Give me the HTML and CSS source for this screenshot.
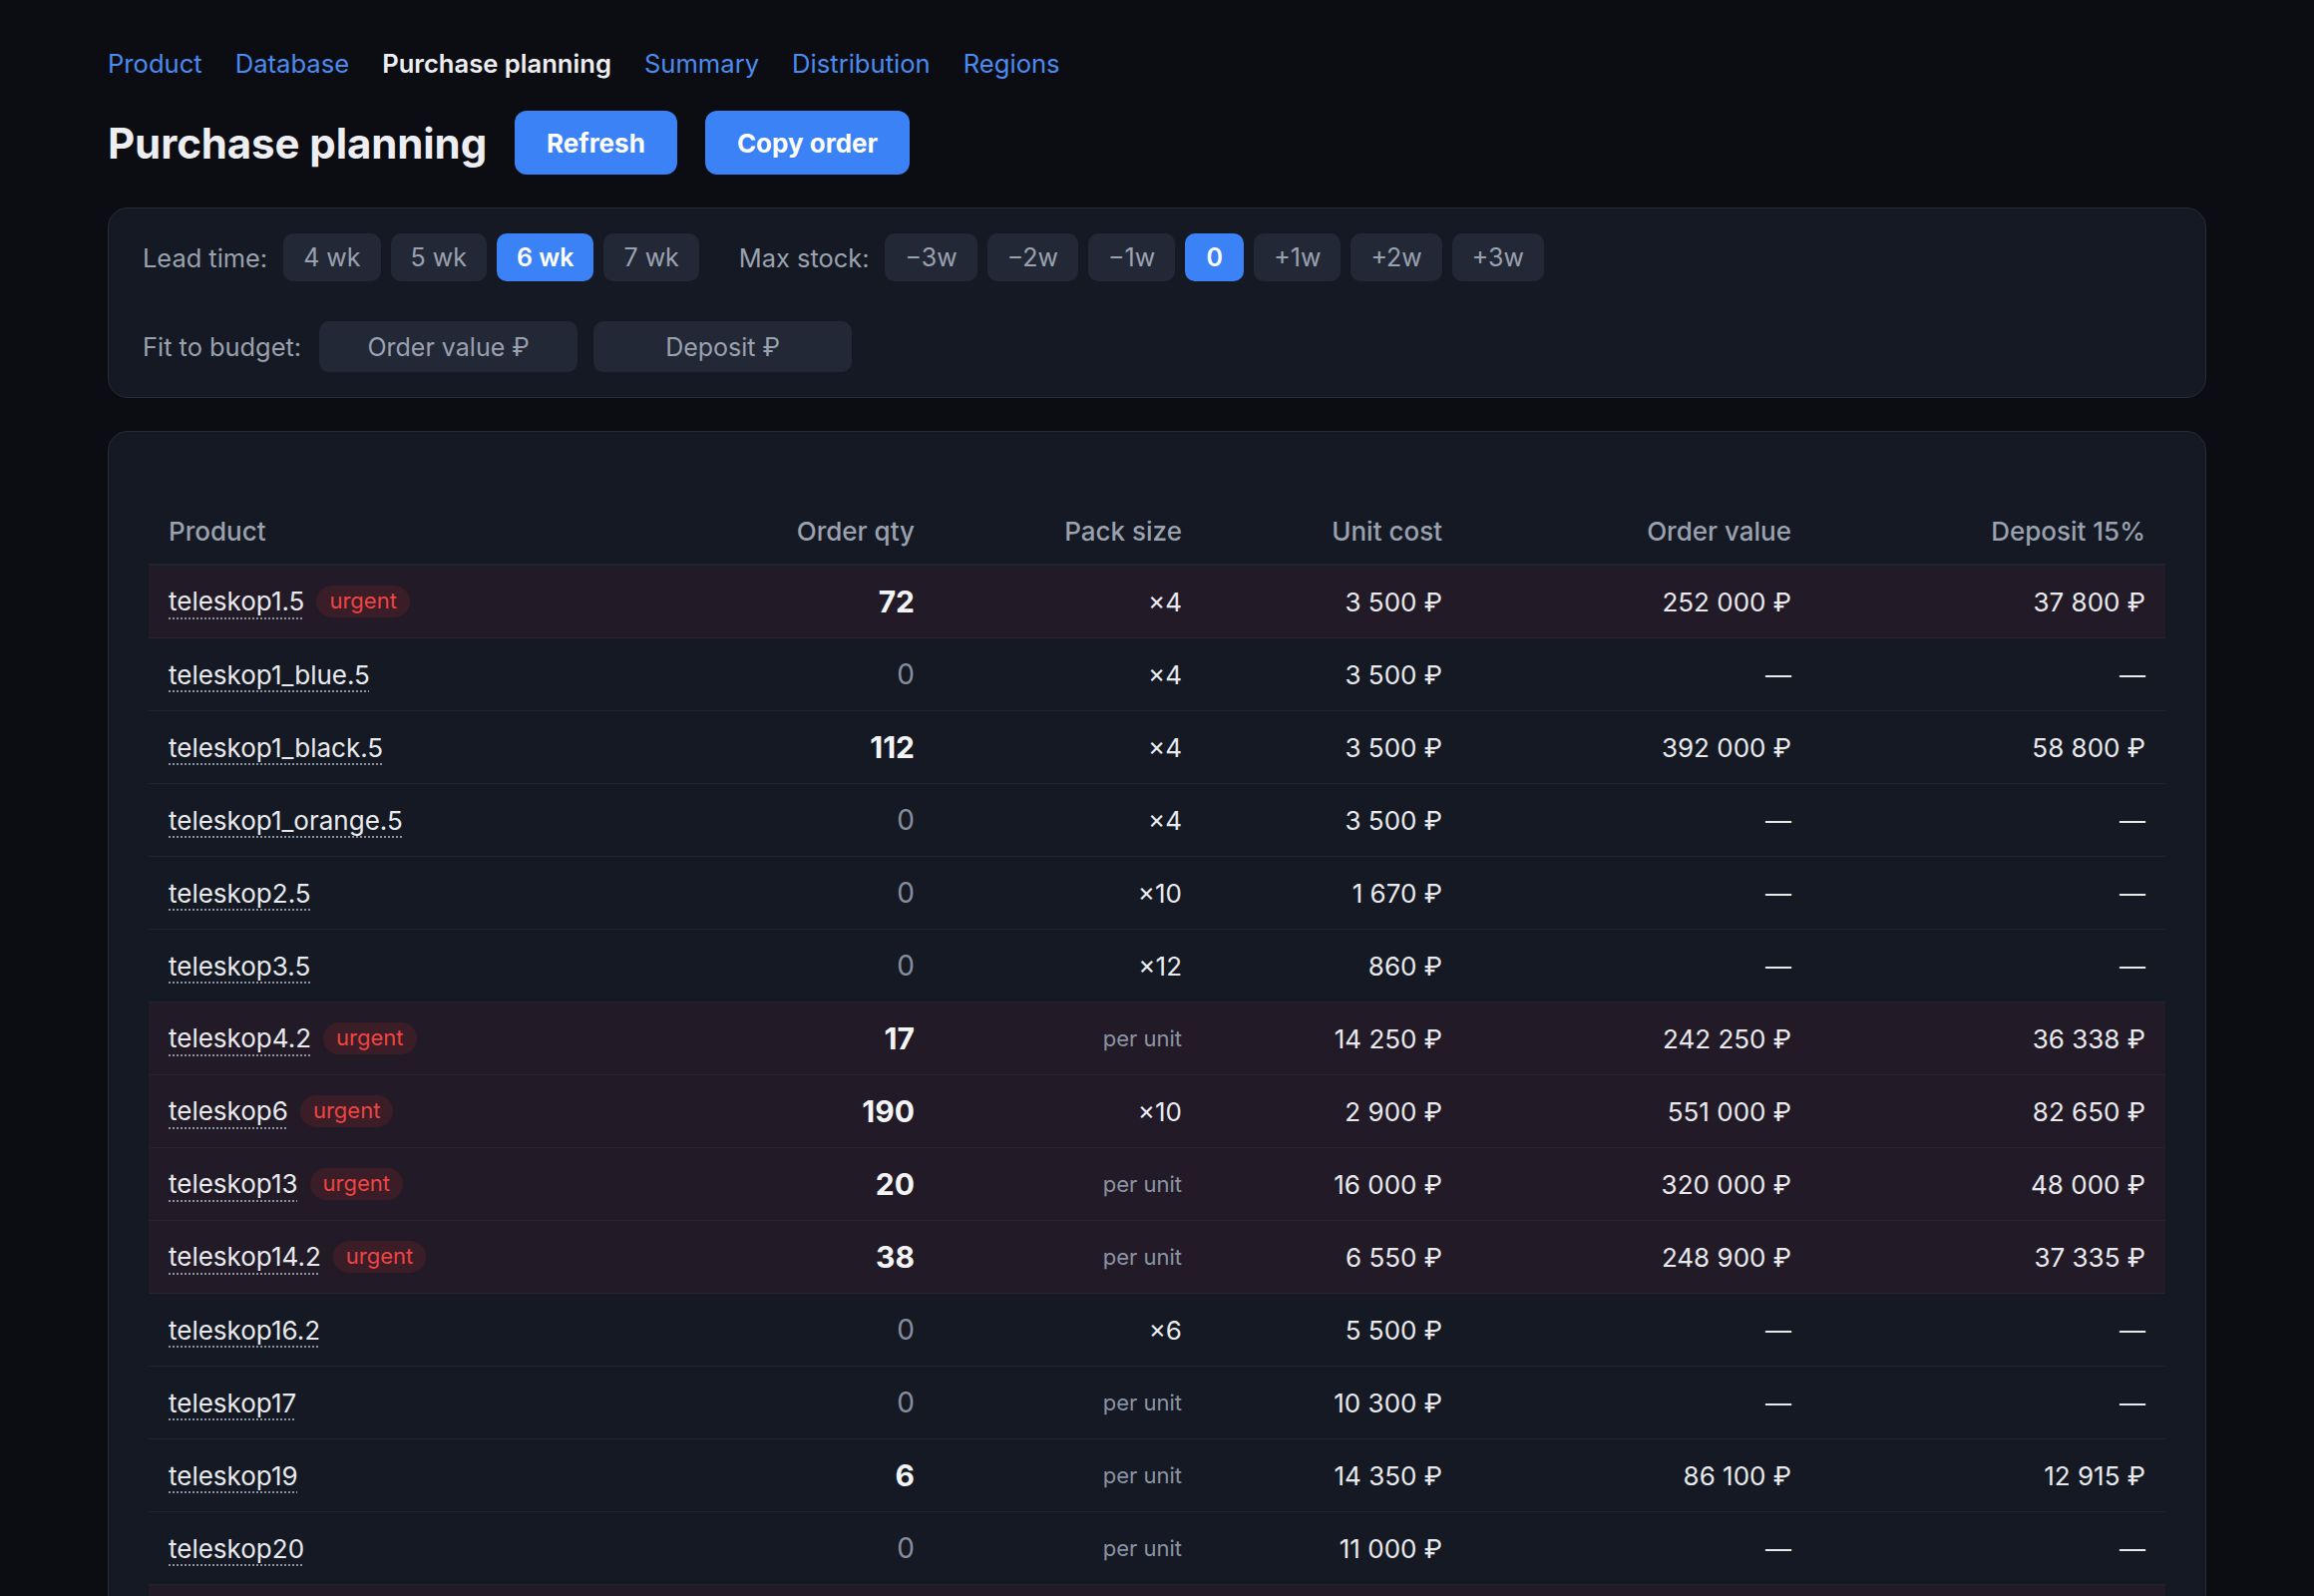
FILE: index.html
```html
<!DOCTYPE html>
<html lang="en">
<head>
  <meta charset="UTF-8" />
  <meta name="viewport" content="width=device-width, initial-scale=1.0"/>
  <title>Purchase planning</title>
  <link rel="stylesheet" href="styles.css">
</head>
<body>

  <nav class="tabs">
    <a href="#">Product</a>
    <a href="#">Database</a>
    <a href="#" class="active">Purchase planning</a>
    <a href="#">Summary</a>
    <a href="#">Distribution</a>
    <a href="#">Regions</a>
  </nav>

  <div class="page-head">
    <h1>Purchase planning</h1>
    <button class="btn">Refresh</button>
    <button class="btn">Copy order</button>
  </div>

  <div class="filters">
    <div class="filter-row">
      <div class="group">
        <span class="label">Lead time:</span>
        <button class="chip">4 wk</button>
        <button class="chip">5 wk</button>
        <button class="chip on">6 wk</button>
        <button class="chip">7 wk</button>
      </div>
      <div class="group">
        <span class="label">Max stock:</span>
        <button class="chip">&minus;3w</button>
        <button class="chip">&minus;2w</button>
        <button class="chip">&minus;1w</button>
        <button class="chip on">0</button>
        <button class="chip">+1w</button>
        <button class="chip">+2w</button>
        <button class="chip">+3w</button>
      </div>
    </div>
    <div class="filter-row budget">
      <span class="label">Fit to budget:</span>
      <button class="chip wide">Order value ₽</button>
      <button class="chip wide">Deposit ₽</button>
    </div>
  </div>

  <div class="card">
    <table class="plan">
      <colgroup>
        <col style="width: 551px">
        <col style="width: 237px">
        <col style="width: 268px">
        <col style="width: 261px">
        <col style="width: 350px">
        <col style="width: 355px">
      </colgroup>
      <thead>
        <tr>
          <th class="left">Product</th>
          <th>Order qty</th>
          <th>Pack size</th>
          <th>Unit cost</th>
          <th>Order value</th>
          <th>Deposit 15%</th>
        </tr>
      </thead>
      <tbody>
        <tr class="urgent">
          <td class="left"><span class="sku">teleskop1.5</span><span class="badge">urgent</span></td>
          <td class="qty">72</td><td>×4</td><td>3&nbsp;500 ₽</td><td>252&nbsp;000 ₽</td><td>37&nbsp;800 ₽</td>
        </tr>
        <tr>
          <td class="left"><span class="sku">teleskop1_blue.5</span></td>
          <td class="qty zero">0</td><td>×4</td><td>3&nbsp;500 ₽</td><td>—</td><td>—</td>
        </tr>
        <tr>
          <td class="left"><span class="sku">teleskop1_black.5</span></td>
          <td class="qty">112</td><td>×4</td><td>3&nbsp;500 ₽</td><td>392&nbsp;000 ₽</td><td>58&nbsp;800 ₽</td>
        </tr>
        <tr>
          <td class="left"><span class="sku">teleskop1_orange.5</span></td>
          <td class="qty zero">0</td><td>×4</td><td>3&nbsp;500 ₽</td><td>—</td><td>—</td>
        </tr>
        <tr>
          <td class="left"><span class="sku">teleskop2.5</span></td>
          <td class="qty zero">0</td><td>×10</td><td>1&nbsp;670 ₽</td><td>—</td><td>—</td>
        </tr>
        <tr>
          <td class="left"><span class="sku">teleskop3.5</span></td>
          <td class="qty zero">0</td><td>×12</td><td>860 ₽</td><td>—</td><td>—</td>
        </tr>
        <tr class="urgent">
          <td class="left"><span class="sku">teleskop4.2</span><span class="badge">urgent</span></td>
          <td class="qty">17</td><td class="muted">per unit</td><td>14&nbsp;250 ₽</td><td>242&nbsp;250 ₽</td><td>36&nbsp;338 ₽</td>
        </tr>
        <tr class="urgent">
          <td class="left"><span class="sku">teleskop6</span><span class="badge">urgent</span></td>
          <td class="qty">190</td><td>×10</td><td>2&nbsp;900 ₽</td><td>551&nbsp;000 ₽</td><td>82&nbsp;650 ₽</td>
        </tr>
        <tr class="urgent">
          <td class="left"><span class="sku">teleskop13</span><span class="badge">urgent</span></td>
          <td class="qty">20</td><td class="muted">per unit</td><td>16&nbsp;000 ₽</td><td>320&nbsp;000 ₽</td><td>48&nbsp;000 ₽</td>
        </tr>
        <tr class="urgent">
          <td class="left"><span class="sku">teleskop14.2</span><span class="badge">urgent</span></td>
          <td class="qty">38</td><td class="muted">per unit</td><td>6&nbsp;550 ₽</td><td>248&nbsp;900 ₽</td><td>37&nbsp;335 ₽</td>
        </tr>
        <tr>
          <td class="left"><span class="sku">teleskop16.2</span></td>
          <td class="qty zero">0</td><td>×6</td><td>5&nbsp;500 ₽</td><td>—</td><td>—</td>
        </tr>
        <tr>
          <td class="left"><span class="sku">teleskop17</span></td>
          <td class="qty zero">0</td><td class="muted">per unit</td><td>10&nbsp;300 ₽</td><td>—</td><td>—</td>
        </tr>
        <tr>
          <td class="left"><span class="sku">teleskop19</span></td>
          <td class="qty">6</td><td class="muted">per unit</td><td>14&nbsp;350 ₽</td><td>86&nbsp;100 ₽</td><td>12&nbsp;915 ₽</td>
        </tr>
        <tr>
          <td class="left"><span class="sku">teleskop20</span></td>
          <td class="qty zero">0</td><td class="muted">per unit</td><td>11&nbsp;000 ₽</td><td>—</td><td>—</td>
        </tr>
        <tr class="urgent">
          <td class="left"><span class="sku">teleskop21</span><span class="badge">urgent</span></td>
          <td class="qty">24</td><td class="muted">per unit</td><td>12&nbsp;400 ₽</td><td>297&nbsp;600 ₽</td><td>44&nbsp;640 ₽</td>
        </tr>
      </tbody>
    </table>
  </div>

</body>
</html>
```

FILE: styles.css
```css
body {
  font-family: Inter, 'Noto Sans', sans-serif;
  background: #0c0d12;
  margin: 0;
  padding: 45px 108px 40px;
  color: #e5e7eb;
}

/* top navigation */
.tabs {
  display: flex;
  gap: 33px;
  font-size: 25.6px;
  line-height: 38px;
}

.tabs a {
  color: #4b8bf0;
  text-decoration: none;
}

.tabs a.active {
  color: #eceef2;
  font-weight: 600;
}

.page-head {
  display: flex;
  align-items: center;
  gap: 28px;
  margin-top: 28px;
}

h1 {
  margin: 0;
  font-size: 42px;
  font-weight: 700;
  letter-spacing: -0.1px;
  color: #eceef2;
}

.btn {
  font-family: inherit;
  height: 64px;
  padding: 0 32px;
  background-color: #3b82f6;
  color: white;
  border: none;
  border-radius: 12px;
  font-size: 26px;
  font-weight: 700;
  cursor: pointer;
}

/* filters */
.filters {
  margin-top: 33px;
  background: #151923;
  border: 1px solid #262b37;
  border-radius: 20px;
  padding: 25px 34px;
  display: flex;
  flex-direction: column;
  gap: 40px;
}

.filter-row {
  display: flex;
  align-items: center;
  gap: 40px;
}

.group {
  display: flex;
  align-items: center;
  gap: 10px;
}

.label {
  font-size: 25.4px;
  color: #9aa1af;
  margin-right: 6px;
}

.chip {
  font-family: inherit;
  font-size: 25px;
  height: 48px;
  min-width: 59px;
  padding: 0 20px;
  background: #232837;
  color: #9aa1af;
  border: none;
  border-radius: 10px;
  cursor: pointer;
}

.chip.on {
  background: #3b82f6;
  color: white;
  font-weight: 600;
}

.filter-row.budget {
  gap: 16px;
}

.filter-row.budget .label {
  margin-right: 2px;
}

.chip.wide {
  width: 259px;
  height: 51px;
}

/* table card */
.card {
  margin-top: 33px;
  background: #151923;
  border: 1px solid #262b37;
  border-radius: 20px;
  padding: 64px 40px 40px;
}

.plan {
  width: 100%;
  table-layout: fixed;
  border-collapse: collapse;
}

.plan th {
  font-size: 26px;
  font-weight: 500;
  color: #9aa1af;
  text-align: right;
  padding: 19px 20px 15px;
  line-height: 34px;
  border-bottom: 2px solid #1f2431;
}

.plan td {
  height: 72px;
  padding: 0 20px;
  font-size: 26px;
  text-align: right;
  color: #e8eaee;
  border-bottom: 1px solid #1f2431;
  white-space: nowrap;
}

.plan .left {
  text-align: left;
}

.plan tr.urgent td {
  background: #221b27;
  border-bottom-color: #2a2330;
}

.sku {
  text-decoration: underline dotted #8b93a3;
  text-decoration-thickness: 2px;
  text-underline-offset: 7px;
}

.badge {
  display: inline-block;
  margin-left: 12px;
  padding: 2px 13px 3px;
  border-radius: 999px;
  background: #3a1d26;
  color: #ef4444;
  font-size: 22px;
  line-height: 27px;
  vertical-align: 2px;
}

.plan td.qty {
  font-size: 30px;
  font-weight: 700;
  color: #f3f4f6;
}

.plan td.qty.zero {
  font-weight: 400;
  font-size: 28px;
  color: #868e9e;
}

.plan td.muted {
  font-size: 22px;
  color: #8b93a3;
}
```
